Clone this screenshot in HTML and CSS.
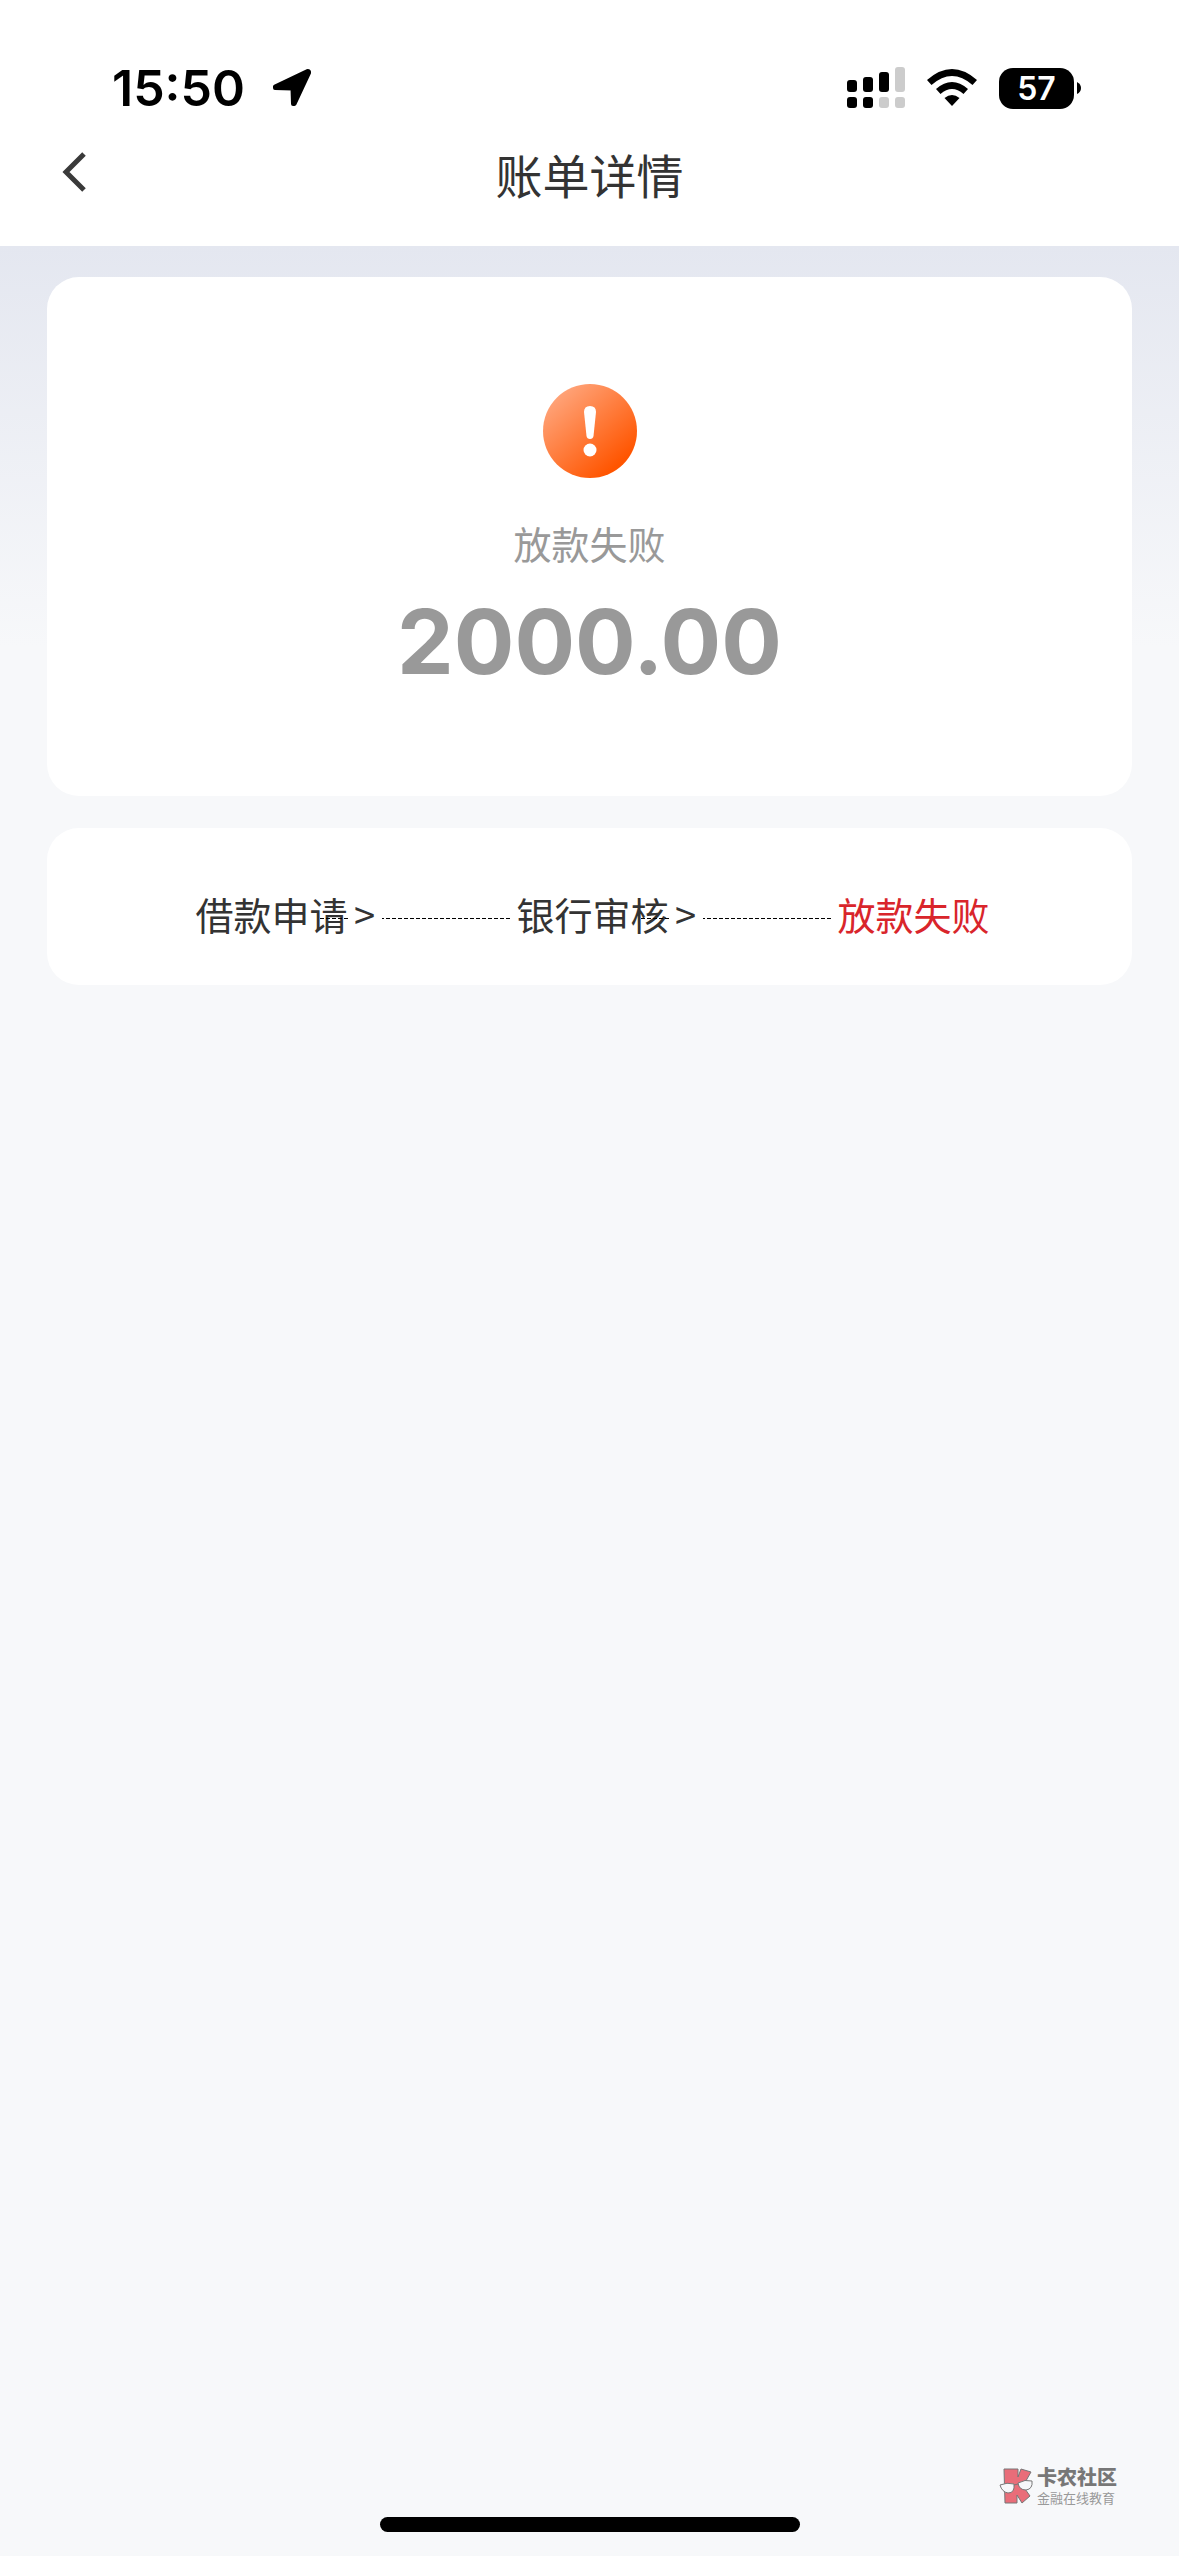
FILE: index.html
```html
<!DOCTYPE html>
<html lang="zh-CN">
<head>
    <meta charset="UTF-8">
    <meta name="viewport" content="width=device-width, initial-scale=1.0">
    <title>账单详情</title>
    <link rel="stylesheet" href="styles.css">
</head>
<body>
    <header class="top">
        <div class="status">
            <span class="time">15:50</span>
            <svg class="location" width="40" height="40" viewBox="0 0 40 40">
                <path d="M3 18.500 L35.500 3 Q37.500 3 37 5 L22.500 36 L21 36 L20.500 20.500 L3 20 Z" fill="#000" stroke="#000" stroke-width="4" stroke-linejoin="round"/>
            </svg>
            <svg class="signal" width="58" height="42" viewBox="0 0 58 42">
                <g fill="#000">
                    <rect x="0" y="13" width="10" height="12" rx="3"/>
                    <rect x="16" y="10" width="10" height="15" rx="3"/>
                    <rect x="32" y="5" width="10" height="20" rx="3"/>
                    <rect x="0" y="30" width="10" height="11" rx="3"/>
                    <rect x="16" y="30" width="10" height="11" rx="3"/>
                </g>
                <g fill="#ccc">
                    <rect x="48" y="0" width="10" height="25" rx="3"/>
                    <rect x="32" y="30" width="10" height="11" rx="3"/>
                    <rect x="48" y="30" width="10" height="11" rx="3"/>
                </g>
            </svg>
            <svg class="wifi" width="50" height="38" viewBox="0 0 50 38">
                <path d="M0 11 Q25 -11 50 11 L45.500 16 Q25 -2 4.500 16 Z"/>
                <path d="M9 20 Q25 6 41 20 L36.500 25 Q25 15 13.500 25 Z"/>
                <path d="M17.500 29 Q25 23 32.500 29 L25 37 Z"/>
            </svg>
            <div class="battery">
                <span class="level">57</span>
                <svg width="4" height="12" viewBox="0 0 4 12">
                    <path d="M0 0 Q4 2 4 6 Q4 10 0 12 Z"/>
                </svg>
            </div>
        </div>
        <div class="nav">
            <button class="back" type="button" aria-label="返回">
                <svg width="26" height="44" viewBox="0 0 26 44">
                    <path d="M23 4 L5 22 L23 40" fill="none" stroke="#3a3a3a" stroke-width="5"/>
                </svg>
            </button>
            <h1>账单详情</h1>
        </div>
    </header>

    <main>
        <section class="card result">
            <svg width="96" height="96" viewBox="0 0 96 96">
                <defs>
                    <linearGradient id="warn" x1="0.1" y1="0.15" x2="0.75" y2="0.9">
                        <stop offset="0" stop-color="#ffa47a"/>
                        <stop offset="1" stop-color="#ff5500"/>
                    </linearGradient>
                </defs>
                <circle cx="48" cy="48" r="47" fill="url(#warn)"/>
                <path d="M42 29 Q42 23 48 23 Q54 23 54 29 L51.500 53 Q51 56 48 56 Q45 56 44.500 53 Z" fill="#fff"/>
                <circle cx="48" cy="67" r="6.500" fill="#fff"/>
            </svg>
            <p class="state">放款失败</p>
            <p class="amount">2000.00</p>
        </section>

        <ol class="card steps">
            <li class="step"><span class="name">借款申请</span><span class="arrow">&gt;</span></li>
            <li class="step"><span class="name">银行审核</span><span class="arrow">&gt;</span></li>
            <li class="fail"><span class="name">放款失败</span></li>
        </ol>
    </main>

    <footer>
        <div class="brand">
            <svg width="34" height="36" viewBox="0 0 34 36">
                <g fill="#e96d79" stroke="#777" stroke-width="1">
                    <path d="M5 1 L19 1 L19 9 L22 1 L32 4 L24 18 L31 28 L23 35 L18 27 L18 35 L6 35 Z"/>
                </g>
                <g fill="#f7f8fa" stroke="#777" stroke-width="1">
                    <path d="M1 17 Q8 14 15 16 Q16 25 9 25 Q3 24 1 17 Z"/>
                    <path d="M19 15 Q26 11 33 13 Q34 21 27 22 Q20 22 19 15 Z"/>
                    <path d="M15 17 L19 16"/>
                </g>
            </svg>
            <div class="brand-text">
                <strong>卡农社区</strong>
                <small>金融在线教育</small>
            </div>
        </div>
        <div class="home-bar"></div>
    </footer>
</body>
</html>
```
FILE: styles.css
```css
* {
    box-sizing: border-box;
    margin: 0;
    padding: 0;
}
body {
    display: flex;
    flex-direction: column;
    min-height: 100vh;
    background-color: #f7f8fa;
    color: #333;
    font-family: "Noto Sans CJK SC", sans-serif;
}

/* status bar + title */
.top {
    padding-top: 56px;
    background-color: #fff;
}
.status {
    display: flex;
    align-items: center;
    height: 64px;
    padding: 0 98px 0 112px;
    color: #000;
    font-family: Inter, sans-serif;
    font-weight: 600;
}
.time {
    font-size: 50px;
    line-height: 64px;
}
.location {
    margin-left: 27px;
}
.signal {
    margin-left: auto;
}
.wifi {
    margin-left: 22px;
}
.battery {
    display: flex;
    align-items: center;
    gap: 3px;
    margin-left: 22px;
}
.level {
    width: 75px;
    border-radius: 14px;
    background-color: #000;
    color: #fff;
    font-size: 32px;
    line-height: 41px;
    text-align: center;
}
.nav {
    display: grid;
    grid-template-columns: 120px 1fr 120px;
    align-items: center;
    height: 126px;
    padding-bottom: 18px;
}
.back {
    display: flex;
    margin-left: 61px;
    padding-bottom: 4px;
    border: none;
    background: none;
}
h1 {
    font-size: 47px;
    font-weight: 400;
    line-height: 64px;
    text-align: center;
}

main {
    flex: 1;
    display: flex;
    flex-direction: column;
    gap: 32px;
    padding: 31px 47px;
    background: linear-gradient(#e4e7f0, #f7f8fa 400px);
}
.card {
    border-radius: 32px;
    background-color: #fff;
}
.result {
    display: flex;
    flex-direction: column;
    align-items: center;
    padding: 106px 0 92px;
    color: #999;
}
.state {
    margin-top: 32px;
    font-size: 38px;
    line-height: 64px;
}
.amount {
    margin-top: 4px;
    font-family: Inter, sans-serif;
    font-size: 90px;
    font-weight: 700;
    line-height: 125px;
}

/* progress */
.steps {
    display: flex;
    justify-content: center;
    padding: 54px 0 39px 6px;
    list-style: none;
    font-size: 38px;
    line-height: 64px;
}
.step {
    position: relative;
    display: flex;
    width: 321px;
}
.step::before {
    content: "";
    position: absolute;
    top: 36px;
    right: 6px;
    width: 190px;
    height: 1px;
    background: repeating-linear-gradient(90deg, #000 0 4px, transparent 4px 6px);
}
.arrow {
    position: relative;
    width: 34px;
    background-color: #fff;
    text-align: center;
}
.fail {
    color: #d9252b;
}

footer {
    padding: 0 62px 24px;
}
.brand {
    display: flex;
    justify-content: flex-end;
    align-items: center;
    gap: 4px;
    margin-bottom: 10px;
    color: #777;
}
.brand-text {
    display: flex;
    flex-direction: column;
}
.brand strong {
    font-size: 20px;
    font-weight: 900;
    line-height: 24px;
}
.brand small {
    color: #999;
    font-size: 13px;
    line-height: 18px;
}
.home-bar {
    width: 420px;
    height: 15px;
    margin: 0 auto;
    border-radius: 8px;
    background-color: #000;
}
```
